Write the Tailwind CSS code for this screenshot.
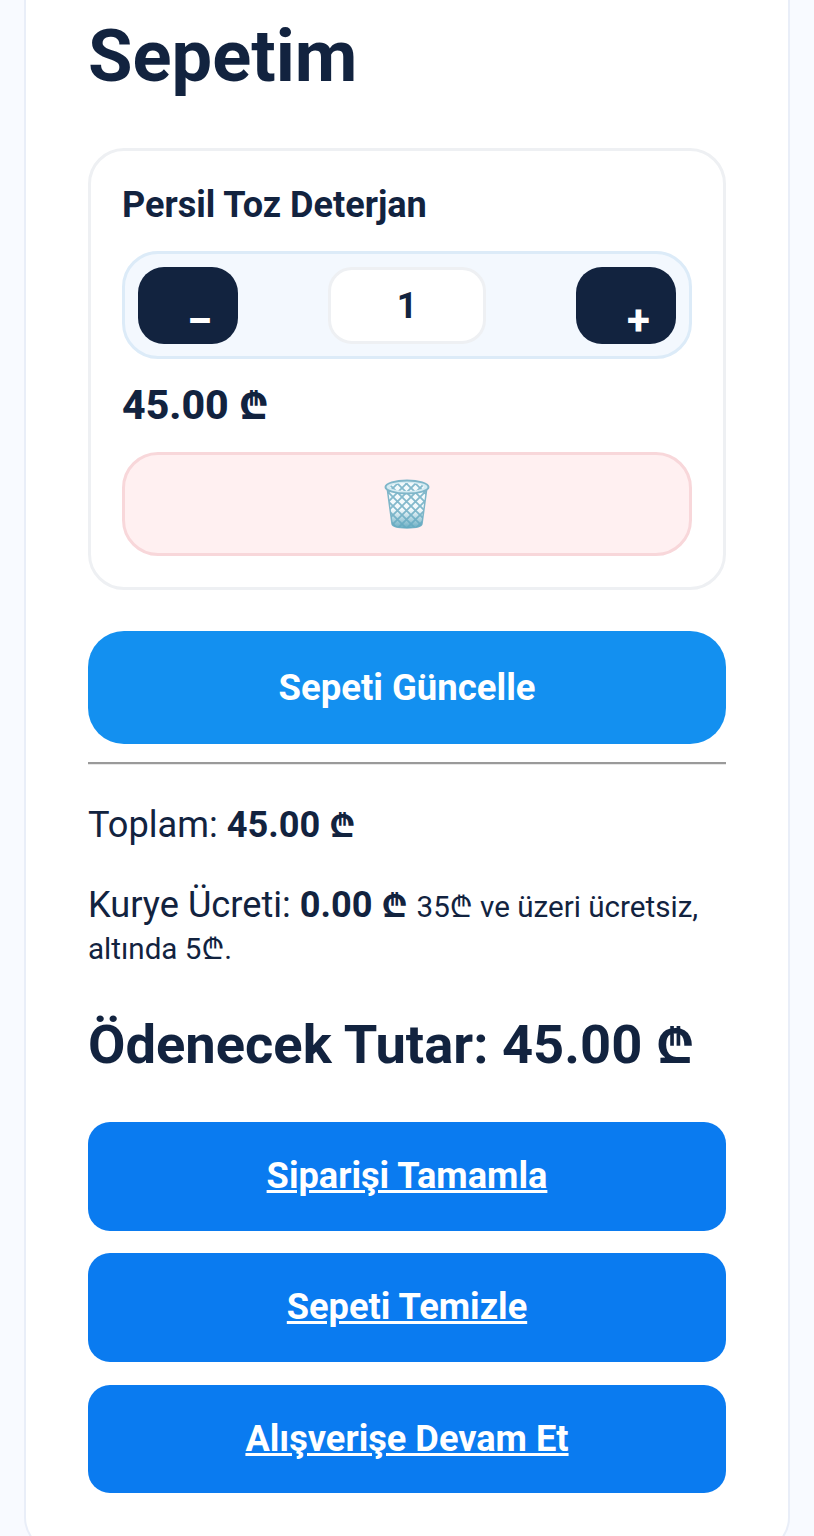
<!DOCTYPE html>
<html lang="tr">
  <head>
    <meta charset="UTF-8" />
    <meta name="viewport" content="width=device-width, initial-scale=1.0" />
    <title>Sepetim</title>
    <script src="https://cdn.jsdelivr.net/npm/@tailwindcss/browser@4"></script>
  </head>
  <body class="bg-[#f8faff] font-['Roboto','Noto_Sans','DejaVu_Sans',sans-serif] text-[#12233f] antialiased">
    <div class="h-[1536px] overflow-hidden px-[24px]">
      <!-- Page card, its top edge is scrolled out of view -->
      <main class="-mt-[40px] h-[1593px] w-[766px] rounded-[36px] border-2 border-[#e9eef8] bg-white px-[62px] pt-[46px]">
        <h1 class="h-[98px] text-[72.300px] leading-[98px] font-bold">Sepetim</h1>

        <!-- Cart item -->
        <section class="mt-[42px] h-[442px] rounded-[36px] border-[3px] border-[#eef0f3] px-[31px] pt-[33px]">
          <h2 class="h-[42px] text-[36.100px] leading-[42px] font-bold">Persil Toz Deterjan</h2>
          <div class="mt-[25px] flex h-[108px] items-center justify-between rounded-[36px] border-[3px] border-[#dcebf8] bg-[#f3f8fe] px-[13px]">
            <button class="flex h-[77px] w-[100px] items-end justify-end rounded-[26px] bg-[#12233f] pr-[27px] text-[38px] leading-[45px] font-black text-white">–</button>
            <div class="flex h-[77px] w-[158px] items-center justify-center rounded-[24px] border-[3px] border-[#eef0f3] bg-white pt-[2px] text-[36px] font-bold">1</div>
            <button class="flex h-[77px] w-[100px] items-end justify-end rounded-[26px] bg-[#12233f] pr-[26px] text-[42px] leading-[46px] font-bold text-white">+</button>
          </div>
          <p class="mt-[22px] h-[48px] text-[41px] leading-[48px] font-extrabold">45.00 <span class="text-[37px]">₾</span></p>
          <button class="mt-[23px] flex h-[104px] w-full items-center justify-center rounded-[36px] border-[3px] border-[#f8d7da] bg-[#fff0f1]">
            <svg width="46" height="50" viewBox="0 0 46 50">
              <defs>
                <pattern id="mesh" width="9" height="9" patternUnits="userSpaceOnUse">
                  <rect width="9" height="9" fill="#f3fafc" />
                  <path d="M0 0L9 9M9 0L0 9" stroke="#83b9cc" stroke-width="1.800" />
                </pattern>
                <linearGradient id="fade" x1="0" y1="0" x2="0" y2="1">
                  <stop offset="0.55" stop-color="#62a9c0" stop-opacity="0" />
                  <stop offset="1" stop-color="#62a9c0" stop-opacity="0.95" />
                </linearGradient>
              </defs>
              <path d="M3 8L8 45Q8.500 49 23 49Q37.500 49 38 45L43 8Z" fill="url(#mesh)" stroke="#7fb6c9" stroke-width="1.500" />
              <path d="M3 8L8 45Q8.500 49 23 49Q37.500 49 38 45L43 8Z" fill="url(#fade)" />
              <ellipse cx="23" cy="8" rx="21.500" ry="6.500" fill="#d5ebf2" stroke="#7fb6c9" stroke-width="2" />
              <ellipse cx="23" cy="8" rx="17" ry="4" fill="url(#mesh)" />
            </svg>
          </button>
        </section>

        <button class="mt-[41px] h-[113px] w-full rounded-[36px] bg-[#1390f0] pt-[2px] text-[36.500px] font-bold text-white">Sepeti Güncelle</button>
        <hr class="mt-[18px] h-[3px] border-t-2 border-[#9a9a9a] border-b border-b-[#e8e8e8]" />

        <!-- Totals -->
        <p class="mt-[36px] h-[48px] text-[36.200px] leading-[48px]">Toplam: <strong class="font-bold">45.00 <span class="text-[33px]">₾</span></strong></p>
        <p class="mt-[36px] text-[36.200px] leading-[40px]">Kurye Ücreti: <strong class="font-bold">0.00 <span class="text-[33px]">₾</span></strong> <span class="text-[29.600px]">35₾ ve üzeri ücretsiz, altında 5₾.</span></p>
        <h2 class="mt-[41px] h-[70px] text-[54.300px] leading-[70px] font-bold whitespace-nowrap">Ödenecek Tutar: 45.00 <span class="text-[49px]">₾</span></h2>

        <!-- Actions -->
        <div class="mt-[42px] flex flex-col gap-[22px]">
          <a class="flex h-[109px] items-center justify-center rounded-[22px] bg-[#0a7bf0] text-[36.200px] font-bold text-white underline">Siparişi Tamamla</a>
          <a class="flex h-[109px] items-center justify-center rounded-[22px] bg-[#0a7bf0] text-[36.200px] font-bold text-white underline">Sepeti Temizle</a>
          <a class="mt-[1px] flex h-[108px] items-center justify-center rounded-[22px] bg-[#0a7bf0] text-[36.200px] font-bold text-white underline">Alışverişe Devam Et</a>
        </div>
      </main>
    </div>
  </body>
</html>
